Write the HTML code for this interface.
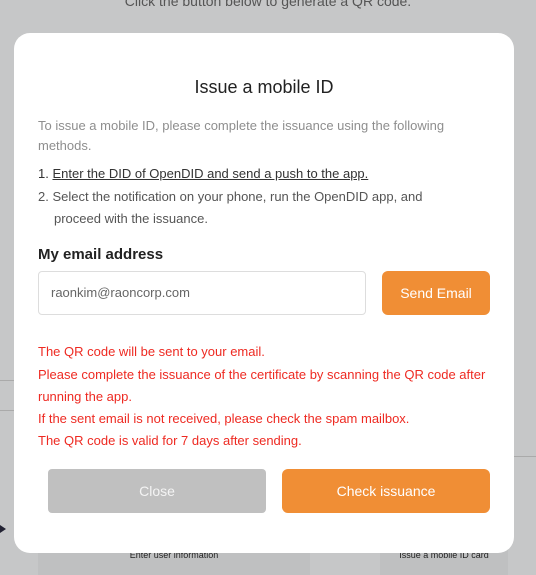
<!DOCTYPE html>
<html><head><style>
*{margin:0;padding:0;box-sizing:border-box}
body{width:536px;height:568px;overflow:hidden;background:#c6c7c8;font-family:"Liberation Sans",sans-serif;position:relative}
.a{position:absolute}
.modal{left:14px;top:33px;width:500px;height:520px;background:#fff;border-radius:16px}
.t{white-space:nowrap}
.g{color:#8e8e8e;font-size:13px}
.k{color:#333;font-size:13px}
.r{color:#ee2a22;font-size:13px}
</style></head><body>
<div class="a t" style="left:0;width:536px;text-align:center;top:-7px;font-size:14px;color:#555">Click the button below to generate a QR code.</div>
<div class="a" style="left:0;top:380px;width:14px;height:1px;background:#aaa"></div>
<div class="a" style="left:0;top:410px;width:14px;height:1px;background:#aaa"></div>
<div class="a" style="left:514px;top:456px;width:22px;height:1px;background:#aaa"></div>
<div class="a" style="left:0;top:525px;width:0;height:0;border-left:6px solid #223;border-top:4px solid transparent;border-bottom:4px solid transparent"></div>
<div class="a" style="left:38px;top:545px;width:272px;height:30px;background:#bfc0c1"></div>
<div class="a" style="left:380px;top:545px;width:128px;height:30px;background:#bfc0c1"></div>
<div class="a t" style="left:38px;width:272px;text-align:center;top:550px;font-size:9px;color:#222">Enter user information</div>
<div class="a t" style="left:380px;width:128px;text-align:center;top:550px;font-size:9px;color:#222">Issue a mobile ID card</div>
<div class="a modal"></div>
<div class="a t" style="left:14px;width:500px;text-align:center;top:77px;font-size:18px;color:#222">Issue a mobile ID</div>
<div class="a t g" style="left:38px;top:118px">To issue a mobile ID, please complete the issuance using the following</div>
<div class="a t g" style="left:38px;top:138px">methods.</div>
<div class="a t k" style="left:38px;top:166px">1. <u>Enter the DID of OpenDID and send a push to the app.</u></div>
<div class="a t k" style="left:38px;top:189px;color:#555">2. Select the notification on your phone, run the OpenDID app, and</div>
<div class="a t k" style="left:54px;top:211px;color:#555">proceed with the issuance.</div>
<div class="a t" style="left:38px;top:246px;font-size:15px;font-weight:bold;color:#222">My email address</div>
<div class="a" style="left:38px;top:271px;width:328px;height:44px;border:1px solid #ddd;border-radius:4px"></div>
<div class="a t" style="left:51px;top:285px;font-size:13px;color:#666">raonkim@raoncorp.com</div>
<div class="a" style="left:382px;top:271px;width:108px;height:44px;background:#f08e35;border-radius:6px;color:#fff;font-size:14px;text-align:center;line-height:44px">Send Email</div>
<div class="a t r" style="left:38px;top:344px">The QR code will be sent to your email.</div>
<div class="a t r" style="left:38px;top:367px">Please complete the issuance of the certificate by scanning the QR code after</div>
<div class="a t r" style="left:38px;top:389px">running the app.</div>
<div class="a t r" style="left:38px;top:411px">If the sent email is not received, please check the spam mailbox.</div>
<div class="a t r" style="left:38px;top:433px">The QR code is valid for 7 days after sending.</div>
<div class="a" style="left:48px;top:469px;width:218px;height:44px;background:#c0c0c0;border-radius:4px;color:#f4f4f4;font-size:14px;text-align:center;line-height:44px">Close</div>
<div class="a" style="left:282px;top:469px;width:208px;height:44px;background:#f08e35;border-radius:6px;color:#fff;font-size:14px;text-align:center;line-height:44px">Check issuance</div>
</body></html>
